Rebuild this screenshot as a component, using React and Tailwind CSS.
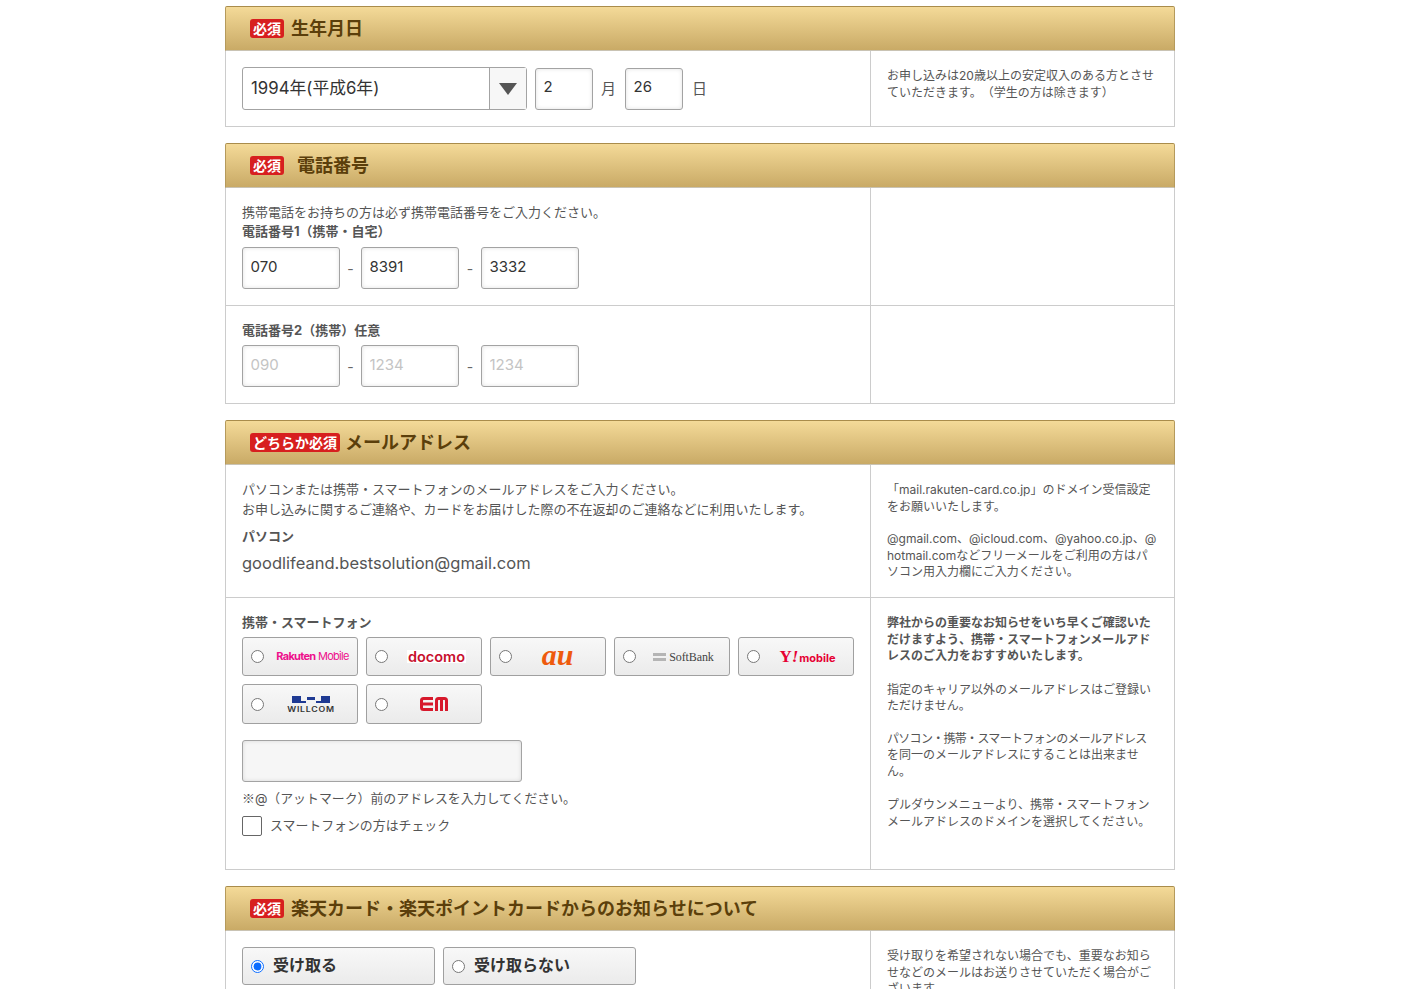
const Badge = ({ children = "必須" }) => (
  <span className="flex h-[19px] items-center justify-center rounded-[3px] bg-[#d71f1f] px-[3px] text-[14px] font-bold leading-none text-white">
    {children}
  </span>
);

const SectionHeader = ({ badge, title, gap = "gap-[7px]" }) => (
  <div className={`flex h-[45px] items-center ${gap} rounded-t-[2px] border border-b-[#c9c3b4] border-x-[#b59a5c] border-t-[#a98c4b] bg-gradient-to-b from-[#f4da98] to-[#c9aa66] pl-[24px]`}>
    <Badge>{badge}</Badge>
    <h2 className="text-[18px] font-bold leading-none text-[#5b3f0b]">{title}</h2>
  </div>
);

const Row = ({ children, note, height }) => (
  <div className={`grid grid-cols-[644px_304px] border-x border-b border-[#cccccc] ${height}`}>
    <div className="px-[16px]">{children}</div>
    <div className="border-l border-[#cccccc] pl-[16px] pr-[14px] text-[12px] leading-[16.5px] text-[#555555]">{note}</div>
  </div>
);

const TextInput = ({ value, placeholder, width = "w-[98px]", bg = "bg-white" }) => (
  <input
    readOnly
    value={value}
    placeholder={placeholder}
    className={`h-[42px] ${width} rounded-[3px] border border-[#a3a3a3] ${bg} px-[7.5px] pb-[4px] text-[15px] text-[#333333] shadow-[inset_0_0_4px_rgba(0,0,0,0.12)] outline-none placeholder:text-[#c4c4c4]`}
  />
);

const PhoneInputs = ({ values, placeholders = [] }) => (
  <div className="flex items-center text-[#666666]">
    <TextInput value={values[0]} placeholder={placeholders[0]} />
    <span className="w-[21px] text-center text-[14px]">-</span>
    <TextInput value={values[1]} placeholder={placeholders[1]} />
    <span className="w-[22px] text-center text-[14px]">-</span>
    <TextInput value={values[2]} placeholder={placeholders[2]} />
  </div>
);

const CarrierBox = ({ h = "h-[39px]", children }) => (
  <label className={`flex ${h} w-[116px] items-center rounded-[3px] border border-[#a0a0a0] bg-gradient-to-b from-[#f8f8f8] to-[#ebebeb] pl-[8px]`}>
    <input type="radio" name="carrier" className="m-0 size-[13px] shrink-0" />
    <span className="flex flex-1 items-center justify-center pl-[4px]">{children}</span>
  </label>
);

const WillcomLogo = () => (
  <span className="mr-[4px] flex flex-col items-center">
    <svg width="38" height="7" viewBox="0 0 38 7" fill="#1f3a93">
      <path d="M0 0h9v5h5v2H0z" />
      <path d="M15 1h8v3h-8z" />
      <path d="M24 5h5V0h9v7H24z" />
    </svg>
    <span className="mt-[3px] text-[7px] font-semibold leading-none tracking-[0.6px] text-[#333333] [transform:scaleX(1.25)]">WILLCOM</span>
  </span>
);

const EmLogo = () => (
  <svg className="mr-[6px]" width="28" height="14" viewBox="0 0 28 14" fill="none" stroke="#d7192c" strokeWidth="3">
    <path d="M13 1.500H3.500Q1.500 1.500 1.500 3.500V10.500Q1.500 12.500 3.500 12.500H13" />
    <path d="M3 7h10" />
    <path d="M16.500 14V3.500Q16.500 1.500 18.500 1.500H24.500Q26.500 1.500 26.500 3.500V14" />
    <path d="M21.500 2V14" />
  </svg>
);

const ChoiceBox = ({ label, checked }) => (
  <label className="flex h-[38px] w-[193px] items-center gap-[9px] rounded-[3px] border border-[#a0a0a0] bg-gradient-to-b from-[#f8f8f8] to-[#ebebeb] pb-[2px] pl-[8px] text-[16px] font-bold text-[#333333]">
    <input type="radio" name="notify" defaultChecked={checked} className="m-0 mt-[2px] size-[13px] accent-[#0b6cff]" />
    {label}
  </label>
);

export default function App() {
  return (
    <div className="h-[989px] w-[1400px] overflow-hidden bg-white font-['Inter','Noto_Sans_CJK_JP',sans-serif] text-[#555555] [text-spacing-trim:space-all]">
      <div className="mx-auto flex w-[950px] flex-col gap-[16px] pt-[6px]">
        <section>
          <SectionHeader title="生年月日" />
          <Row
            height="h-[76px]"
            note={<p className="pt-[17px]">お申し込みは20歳以上の安定収入のある方とさせていただきます。（学生の方は除きます）</p>}
          >
            <div className="flex items-center pt-[16px]">
              <div className="flex h-[43px] w-[285px] rounded-[3px] border border-[#a3a3a3] bg-white">
                <span className="flex flex-1 items-center pl-[8px] text-[16.8px] text-[#333333]">1994年(平成6年)</span>
                <span className="flex w-[37px] items-center justify-center border-l border-[#a3a3a3] bg-[#f7f7f7]">
                  <svg width="18" height="12" viewBox="0 0 18 12"><path d="M0 0h18l-9 12z" fill="#555555" /></svg>
                </span>
              </div>
              <div className="ml-[8px]"><TextInput value="2" width="w-[58px]" /></div>
              <span className="ml-[8px] w-[24px] pt-[2px] text-[15px]">月</span>
              <TextInput value="26" width="w-[58px]" />
              <span className="ml-[9px] pt-[2px] text-[15px]">日</span>
            </div>
          </Row>
        </section>

        <section>
          <SectionHeader title="電話番号" gap="gap-[13px]" />
          <Row height="h-[118px]">
            <p className="pt-[16px] text-[13px] leading-[17px]">携帯電話をお持ちの方は必ず携帯電話番号をご入力ください。</p>
            <p className="mt-[1px] text-[13px] font-bold leading-[19px]">電話番号1（携帯・自宅）</p>
            <div className="mt-[6px]"><PhoneInputs values={["070", "8391", "3332"]} /></div>
          </Row>
          <Row height="h-[98px]">
            <p className="pt-[15px] text-[13px] font-bold leading-[19px]">電話番号2（携帯）任意</p>
            <div className="mt-[5px]"><PhoneInputs values={["", "", ""]} placeholders={["090", "1234", "1234"]} /></div>
          </Row>
        </section>

        <section>
          <SectionHeader badge="どちらか必須" title="メールアドレス" gap="gap-[5px]" />
          <Row
            height="h-[133px]"
            note={
              <div className="pt-[17px]">
                <p>「mail.rakuten-card.co.jp」のドメイン受信設定をお願いいたします。</p>
                <p className="mt-[16px]">@gmail.com、@icloud.com、@yahoo.co.jp、@<br />hotmail.comなどフリーメールをご利用の方はパ<br />ソコン用入力欄にご入力ください。</p>
              </div>
            }
          >
            <p className="pt-[14px] text-[13px] leading-[20px]">パソコンまたは携帯・スマートフォンのメールアドレスをご入力ください。<br />お申し込みに関するご連絡や、カードをお届けした際の不在返却のご連絡などに利用いたします。</p>
            <p className="mt-[8px] text-[13px] font-bold leading-[19px]">パソコン</p>
            <p className="mt-[7px] text-[16.5px] leading-[20px]">goodlifeand.bestsolution@gmail.com</p>
          </Row>
          <Row
            height="h-[272px]"
            note={
              <div className="pt-[17px]">
                <p className="font-bold">弊社からの重要なお知らせをいち早くご確認いただけますよう、携帯・スマートフォンメールアドレスのご入力をおすすめいたします。</p>
                <p className="mt-[17px]">指定のキャリア以外のメールアドレスはご登録いただけません。</p>
                <p className="mt-[16px]"><span className="whitespace-nowrap tracking-[-0.7px]">パソコン・携帯・スマートフォンのメールアドレス</span><br />を同一のメールアドレスにすることは出来ません。</p>
                <p className="mt-[17px]">プルダウンメニューより、携帯・スマートフォンメールアドレスのドメインを選択してください。</p>
              </div>
            }
          >
            <p className="pt-[15px] text-[13px] font-bold leading-[19px]">携帯・スマートフォン</p>
            <div className="mt-[5px] flex flex-wrap gap-[8px]">
              <CarrierBox>
                <span className="text-[11px] tracking-[-0.7px] text-[#ee0f8c]"><b>Rakuten</b> Mobile</span>
              </CarrierBox>
              <CarrierBox>
                <span className="bg-white px-[1px] text-[14.5px] font-semibold leading-[13px] text-[#c8102e]">docomo</span>
              </CarrierBox>
              <CarrierBox>
                <span className="mr-[6px] pb-[4px] font-['Liberation_Serif',serif] text-[30px] font-bold italic leading-[20px] text-[#ee5a0d]">au</span>
              </CarrierBox>
              <CarrierBox>
                <span className="mr-[2px] flex items-center gap-[3px]">
                  <span className="flex w-[13px] flex-col gap-[2px]">
                    <span className="h-[3px] bg-[#b5b5b5]" />
                    <span className="h-[3px] bg-[#b5b5b5]" />
                  </span>
                  <span className="font-['Liberation_Serif',serif] text-[12px] tracking-[-0.1px] text-[#444444]">SoftBank</span>
                </span>
              </CarrierBox>
              <CarrierBox>
                <span className="mr-[2px] flex items-baseline font-['Liberation_Serif',serif] text-[#e60033]">
                  <span className="text-[17px] font-bold leading-none">Y</span>
                  <span className="text-[17px] font-bold italic leading-none">!</span>
                  <span className="ml-[1px] font-['Inter',sans-serif] text-[11px] font-bold leading-none">mobile</span>
                </span>
              </CarrierBox>
              <CarrierBox h="h-[40px]"><WillcomLogo /></CarrierBox>
              <CarrierBox h="h-[40px]"><EmLogo /></CarrierBox>
            </div>
            <div className="mt-[16px]"><TextInput value="" width="w-[280px]" bg="bg-[#f6f6f6]" /></div>
            <p className="mt-[7px] text-[12.9px] leading-[17px]"><span className="font-['Noto_Sans_CJK_JP',sans-serif]">※</span>@（アットマーク）前のアドレスを入力してください。</p>
            <label className="mt-[9px] flex items-center gap-[8px] text-[12.9px]">
              <span className="size-[20px] rounded-[2px] border border-[#666666] bg-white" />
              スマートフォンの方はチェック
            </label>
          </Row>
        </section>

        <section>
          <SectionHeader title="楽天カード・楽天ポイントカードからのお知らせについて" />
          <Row
            height="h-[100px]"
            note={<p className="pt-[17px]">受け取りを希望されない場合でも、重要なお知らせなどのメールはお送りさせていただく場合がございます。</p>}
          >
            <div className="flex gap-[8px] pt-[16px]">
              <ChoiceBox label="受け取る" checked />
              <ChoiceBox label="受け取らない" />
            </div>
          </Row>
        </section>
      </div>
    </div>
  );
}
